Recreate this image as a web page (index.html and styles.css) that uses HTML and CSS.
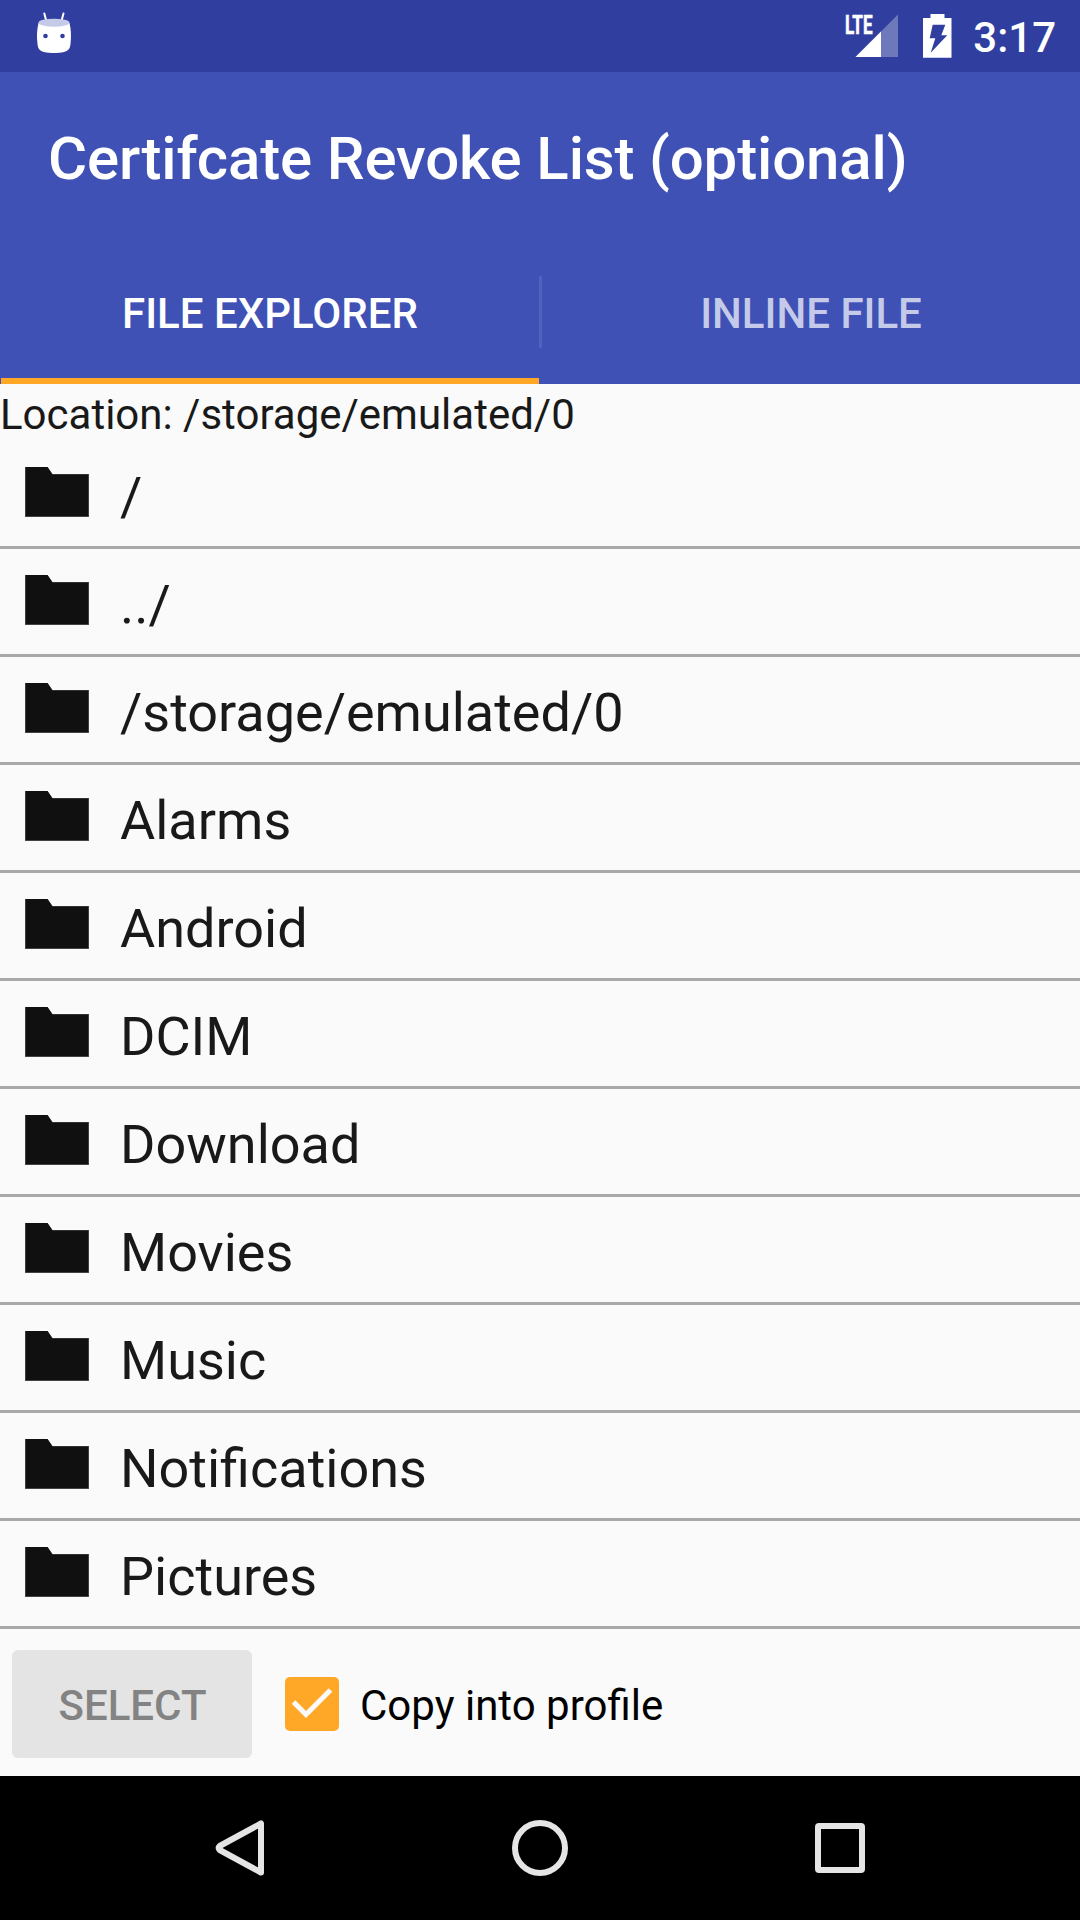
FILE: index.html
```html
<!DOCTYPE html>
<html lang="en">
<head>
<meta charset="utf-8">
<title>Certifcate Revoke List (optional)</title>
<link rel="stylesheet" href="styles.css">
</head>
<body>
<svg class="defs" aria-hidden="true">
  <symbol id="folder" viewBox="0 0 64 50"><path fill="#555" d="M0 0H22.5L27.5 7H64V50H0z"/><path fill="#101010" d="M.7 0H22.5L27.5 7.5H63.3V49.2H.7z"/></symbol>
</svg>
<div class="screen">
  <div class="status">
    <svg class="notification" width="36" height="44" viewBox="36 11 36 44">
      <path d="M44.3 13.5L46.6 22M63.5 13.5L61.2 22" stroke="#fff" stroke-width="2" stroke-linecap="round"/>
      <path fill="#fff" d="M38.5 23C37 29 36.500 36 37.500 44C38 49 40 51 44 52C50 53.300 58 53.300 64 52C68 51 70 49 70.500 44C71.500 36 71 29 69.500 23z"/>
      <ellipse cx="54" cy="22.700" rx="15.500" ry="4" fill="#c5cae9"/>
      <circle cx="45.500" cy="36" r="2.300" fill="#303f9f"/><circle cx="62.500" cy="36" r="2.300" fill="#303f9f"/>
    </svg>
    <div class="indicators">
      <svg class="signal" width="56" height="52" viewBox="843 7 56 52">
        <text class="lte" x="845" y="33.500" textLength="27.500" lengthAdjust="spacingAndGlyphs">LTE</text>
        <path fill="#fff" fill-opacity=".3" d="M898 14.500V57H855.500z"/>
        <path fill="#fff" d="M881 31.500V57H855.500z"/>
      </svg>
      <svg class="battery" width="29" height="46" viewBox="923 13 29 46">
        <path fill="#fff" fill-rule="evenodd" d="M930.500 14H944.500V18H951.500V57.700H923V18H930.500zM932.700 24.700L929.700 38.300H935.300L930.700 52.700L947.300 35.300H941.300L945.300 24.700z"/>
      </svg>
      <span class="clock">3:17</span>
    </div>
  </div>
  <header class="appbar">
    <h1 class="title">Certifcate Revoke List (optional)</h1>
    <nav class="tabs">
      <div class="tab active">FILE EXPLORER</div>
      <div class="divider"></div>
      <div class="tab">INLINE FILE</div>
    </nav>
  </header>
  <main class="content">
    <div class="location">Location: /storage/emulated/0</div>
    <ul class="files">
      <li class="file"><svg class="folder"><use href="#folder"/></svg><span>/</span></li>
      <li class="file"><svg class="folder"><use href="#folder"/></svg><span>../</span></li>
      <li class="file"><svg class="folder"><use href="#folder"/></svg><span>/storage/emulated/0</span></li>
      <li class="file"><svg class="folder"><use href="#folder"/></svg><span>Alarms</span></li>
      <li class="file"><svg class="folder"><use href="#folder"/></svg><span>Android</span></li>
      <li class="file"><svg class="folder"><use href="#folder"/></svg><span>DCIM</span></li>
      <li class="file"><svg class="folder"><use href="#folder"/></svg><span>Download</span></li>
      <li class="file"><svg class="folder"><use href="#folder"/></svg><span>Movies</span></li>
      <li class="file"><svg class="folder"><use href="#folder"/></svg><span>Music</span></li>
      <li class="file"><svg class="folder"><use href="#folder"/></svg><span>Notifications</span></li>
      <li class="file"><svg class="folder"><use href="#folder"/></svg><span>Pictures</span></li>
    </ul>
    <div class="actions">
      <button class="select" disabled>SELECT</button>
      <div class="option">
        <svg width="54" height="54" viewBox="0 0 54 54"><rect width="54" height="54" rx="5" fill="#ffa726"/><path d="M8.500 25L21 37.500L45.500 13" fill="none" stroke="#fafafa" stroke-width="5"/></svg>
        <span class="option-label">Copy into profile</span>
      </div>
    </div>
  </main>
  <footer class="navbar">
    <svg width="50" height="58" viewBox="215 1819 50 58"><path d="M261 1823.500V1872.500L219.700 1850Q217.500 1848 219.700 1846z" fill="none" stroke="#e5e5e5" stroke-width="6" stroke-linejoin="round"/></svg>
    <svg width="56" height="56" viewBox="0 0 56 56"><circle cx="28" cy="28" r="25" fill="none" stroke="#e5e5e5" stroke-width="6"/></svg>
    <svg width="50" height="50" viewBox="0 0 50 50"><rect x="3" y="3" width="44" height="44" rx="1" fill="none" stroke="#e5e5e5" stroke-width="6" stroke-linejoin="round"/></svg>
  </footer>
</div>
</body>
</html>
```
FILE: styles.css
```css
* { box-sizing: border-box; }
body { margin: 0; font-family: Roboto, sans-serif; font-size: 42px; color: #191919; background: #fafafa; }
svg { display: block; flex: none; }
.defs { position: absolute; width: 0; height: 0; }
.screen { width: 1080px; height: 1920px; display: flex; flex-direction: column; overflow: hidden; }

.status { height: 72px; background: #303f9f; color: #fff; display: flex; justify-content: space-between; padding: 0 24px 0 36px; }
.notification { margin-top: 11px; }
.indicators { display: flex; align-items: flex-start; padding-top: 7px; }
.battery { margin: 6px 0 0 24px; }
.clock { margin: 6px 0 0 21px; font-weight: 500; line-height: 50px; }
.signal { overflow: visible; }
.lte { font: 700 26px Roboto, sans-serif; fill: #fff; stroke: #fff; stroke-width: .6px; }

.appbar { height: 312px; background: #3f51b5; color: #fff; display: flex; flex-direction: column; }
.title { margin: 0; padding-left: 48px; height: 168px; font-size: 60px; font-weight: 500; line-height: 174px; letter-spacing: -.15px; white-space: nowrap; }
.tabs { height: 144px; display: flex; align-items: center; }
.tab { flex: 1; height: 144px; line-height: 144px; padding-top: 2px; text-align: center; font-weight: 500; color: #c5cae9; }
.tab.active { color: #fff; border-bottom: 6px solid #ffa726; margin-left: 1px; }
.divider { width: 3px; height: 72px; background: #5262bc; }

.content { height: 1392px; }
.location { height: 57px; line-height: 62px; white-space: nowrap; }
.files { list-style: none; margin: 0; padding: 0; }
.file { height: 108px; border-bottom: 3px solid #a9a9a9; padding: 26px 0 0 25px; display: flex; align-items: flex-start; font-size: 54px; line-height: 60px; }
.folder { width: 64px; height: 50px; margin-right: 31px; }
.actions { display: flex; align-items: center; padding: 21px 12px 18px; }
.select { width: 240px; height: 108px; border: 0; border-radius: 6px; padding: 2px 0 0 1px; background: #e4e4e4; color: #838383; font: 500 42px Roboto, sans-serif; }
.option { display: flex; align-items: center; gap: 21px; margin-left: 33px; color: #000; }
.option-label { padding-top: 2px; }

.navbar { height: 144px; background: #000; display: flex; align-items: center; justify-content: space-between; padding: 0 215px; }
```
